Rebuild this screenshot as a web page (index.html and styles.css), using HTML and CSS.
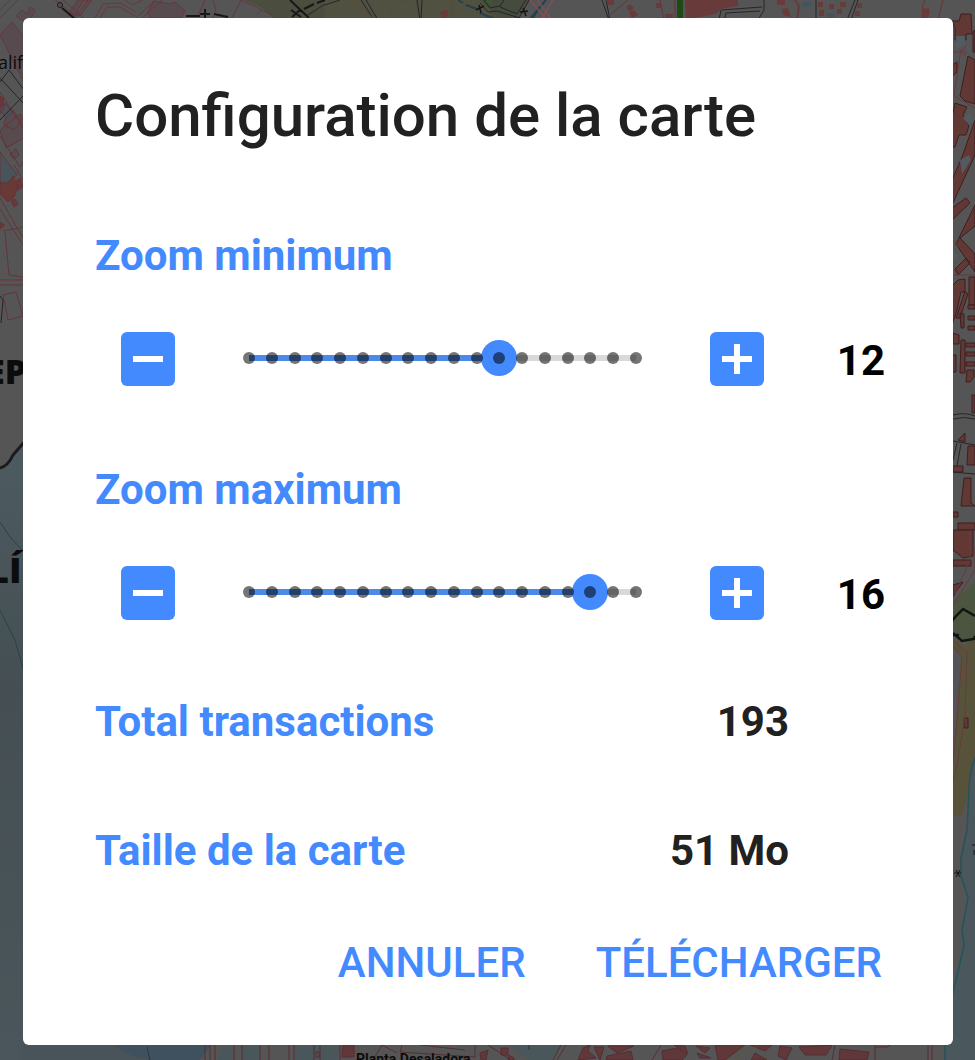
FILE: index.html
```html
<!DOCTYPE html>
<html lang="fr">
<head>
<meta charset="utf-8">
<meta name="viewport" content="width=device-width, initial-scale=1">
<title>Configuration de la carte</title>
<link rel="stylesheet" href="styles.css">
</head>
<body>
<svg class="map" viewBox="0 0 975 1060" preserveAspectRatio="xMidYMid slice" aria-hidden="true">
  <defs>
    <linearGradient id="sea" x1="0" x2="0" y1="0" y2="1">
      <stop offset="0" stop-color="#4d5b60"/><stop offset=".4" stop-color="#454f53"/><stop offset="1" stop-color="#4a565b"/>
    </linearGradient>
  </defs>
  <rect width="975" height="1060" fill="#565555"/>
  <!-- land use -->
  <path fill="#4b4d3e" d="M245 0H530L518 20H275L262 8Z"/>
  <path fill="#505140" d="M325 0H490V20H325Z"/>
  <path fill="#454b3d" d="M480 0H525L516 18H500Z"/>
  <path fill="#4c5540" d="M950 604L975 582V650L950 628Z"/>
  <path fill="#57533b" d="M950 634L965 646 975 640V770L962 816H950Z"/>
  <path fill="#555357" d="M950 646L961 656 953 760H950Z"/>
  <!-- sea -->
  <path fill="url(#sea)" d="M0 468Q8 466 13 455L26 440V1060H0Z"/>
  <path fill="#4a575d" d="M975 758Q969 774 969 790L967 830 961 858V876L968 898 962 930V945L950 1005V1045H945V1060H975Z"/>
  <path fill="none" stroke="#1d1a1d" stroke-width="3" d="M0 468Q8 466 13 455L26 440"/>
  <path fill="none" stroke="#24535d" stroke-width="1.5" d="M975 758Q969 774 969 790L967 830 961 858V876L968 898 962 930 964 946 950 1005M945 1045V1060"/>
  <path fill="none" stroke="#25434c" d="M0 522L10 537 24 552M0 610L15 640 24 672"/>
  <path fill="#3f505f" d="M20 1044H212L200 1060H150Q128 1057 113 1044Z"/>
  <path fill="#48535a" d="M20 1044H114Q130 1058 150 1060H20Z"/>
  <path fill="#49565a" d="M222 1044H232V1060H218ZM242 1044H259V1060H242ZM295 1044H338V1060H295ZM508 1044H561L552 1060H529Z"/>
  <!-- top streets -->
  <g fill="#584b4f" stroke="#66373d">
    <path d="M0 35L12 22 44 62 24 82ZM16 16L22 10 27 14 30 7 35 10 32 17 24 22ZM69 13L78 0H88L76 16ZM84 0L75 14 80 16 92 0ZM148 11L154 1 170 4 175 2 185 11 181 18H150Z"/>
    <path fill="none" d="M0 10L10 0M0 18L18 0M55 0L80 20M63 0L86 20M94 20L103 4 120 3 136 12M99 20L107 7 120 7 135 16M125 0L132 5 143 0M155 0L134 20M162 0L140 20M197 18L205 0M213 0L216 10 212 20M232 18L241 0 273 15M257 15L262 10"/>
  </g>
  <g fill="none" stroke="#181818" stroke-width="2">
    <path d="M62 8L75 19M186 16H200M200 14H210M205 9V19M214 14L228 17M290 0L309 18M292 17L300 10M291 10L301 17M304 9L314 4M317 3L325 0"/>
    <circle cx="60" cy="5" r="2.5" stroke-width="1"/>
  </g>
  <g fill="none" stroke="#242628">
    <path d="M325 5L340 0M361 0L374 20M366 0L378 20M417 0L420 20M422 0L421 20M484 0L490 8 500 6 504 0M480 3L488 12 497 11 520 18M500 7L517 14 526 0M529 0L518 20M308 15L325 4"/>
    <path stroke="#5c4930" d="M354 0L373 18M381 2Q388 5 391 12L398 20M403 0Q407 4 410 0M451 0L453 20"/>
    <path stroke="#26414e" stroke-width="2" d="M458 0L463 3M466 5L477 9M480 13L495 19M546 0L530 19M539 8L533 18"/>
    <path stroke="#7d5058" stroke-width="1.5" d="M530 0L547 20M537 0L552 20M553 0L542 18"/>
    <path stroke="#161616" stroke-width="1.5" d="M476 10L484 6M479 5L481 13M520 12L528 11M523 8L526 16"/>
    <path stroke="#2f6325" stroke-width="3" d="M487 2H492"/>
    <path stroke="#1f4a14" stroke-width="6" d="M680 0V20"/>
    <path d="M602 0L609 20M606 0L610 20M719 20L721 10 762 7M724 20L726 13 760 11M764 0V10L758 20M816 0V20M855 0L847 20M858 0L851 20"/>
  </g>
  <g fill="#683a39">
    <path d="M606 0H614V5H608ZM626 7L630 4 634 8 630 12ZM629 13L634 10 638 15 632 18ZM440 12L447 10 449 16 443 18ZM656 3H661V8H656ZM665 14H673V20H665ZM685 0H738V6L725 8 715 14 700 17 686 20ZM777 0H785V5H777ZM782 9L788 8 791 17 783 15ZM818 2H823V7H818ZM819 10H824V16H819ZM829 4H834V9H829ZM837 9H842V14H837ZM840 2H846V7H840ZM855 11H860V16H855ZM857 3H862V8H857ZM922 8L930 9 928 20H921Z"/>
    <path fill="none" stroke="#683a39" stroke-width="2" d="M795 0L799 6 797 20"/>
    <path fill="none" stroke="#62353a" d="M660 0L664 20M675 0V20M925 0L922 8M943 0L938 20M611 14L628 0"/>
  </g>
  <path fill="#43545c" d="M802 2H811V7H802ZM827 13H835V18H827Z"/>
  <!-- left quarter -->
  <g fill="#584b4f" stroke="#63343a">
    <path d="M0 130L20 114 24 122V138L6 148ZM10 154L16 149 19 155 14 159ZM0 100L6 107 0 114ZM7 113L13 110 21 122 14 130 4 125Z"/>
    <path fill="#48545a" d="M0 152L17 175 0 188ZM5 103L12 112 6 118 2 112Z"/>
    <path fill="#683935" d="M0 182L8 184 13 176 18 187 14 197 8 202 0 194ZM16 181L20 178 23 187 18 190ZM11 201L15 199 18 204 14 207ZM0 222L5 225 0 229ZM0 96L4 99 2 107 0 106Z"/>
    <path fill="none" d="M0 136L20 167 23 162M0 198L23 238M0 209L23 245M24 182L14 165M3 231L24 227M5 232L9 275 23 277M0 280H23M0 285H23M3 295L16 292 23 316 8 320ZM0 92L24 130"/>
  </g>
  <path fill="none" stroke="#242526" d="M0 82L9 70 24 90M0 78L24 104M0 120L24 95M0 296L3 300 1 323"/>
  <!-- right quarter -->
  <g fill="#613834" stroke="#3d1f21">
    <path d="M952 21H959L961 14H971L972 34H966V40H955V28ZM973 32L975 30V52H973ZM968 56L975 60V104L965 101 960 96ZM952 65L957 62V72L952 76ZM955 103L967 107 963 115 969 126 966 135H959L955 147H951V122ZM975 120V155L952 205V180L962 157ZM952 208L966 198 970 203 952 220ZM975 205V226L960 238 975 254V272L956 244ZM955 269L966 258 970 263 958 275ZM952 286L958 280 965 279V292H961L957 310 952 325ZM969 277H975V305H969ZM965 291L968 294 960 318H956ZM960 313L964 314V328H961ZM953 333L959 335V344H953ZM961 340H965V373H960ZM952 355H956V372H952ZM967 370H974V377L970 382H966ZM972 395H975V413H972ZM958 440L965 433V442ZM968 446H975V465H967ZM953 466H963V472H953ZM964 478H971V503L975 506H961ZM953 512H958V517H953ZM958 523H975V530H958Z"/>
    <path d="M968 305H975V309H968ZM968 316H975V320H968ZM968 326H975V330H968ZM966 343H975V347H966ZM966 352H975V356H966ZM966 362H975V366H966ZM953 530H973V556L963 558 953 550ZM953 560H971V566H953ZM953 585L963 582 953 596ZM964 718H968V728H964Z"/>
  </g>
  <path fill="#515b60" d="M960 160L969 155 971 160 962 174ZM956 36H965V45L956 49ZM963 118L969 113 975 120 969 125ZM952 250L958 256 952 263Z"/>
  <g fill="none" stroke="#693a3d">
    <path d="M952 52Q963 54 966 45M961 49L954 96 975 108M953 240L975 265M953 275H975M970 530V560L953 599M975 547V570L953 605M952 640L967 652 965 715 958 760 953 782M952 645L962 657 957 720 953 760"/>
    <path stroke="#252627" d="M953 415Q965 412 975 416M953 419Q965 416 975 419M953 441L975 445M953 472L975 474M957 443L953 460M961 444L957 466"/>
    <circle cx="964" cy="53" r="2"/>
  </g>
  <path fill="none" stroke="#11150f" stroke-width="2.5" d="M952 621L956 616 963 609 975 616M953 633L962 641 974 639 975 636M953 635H959"/>
  <path stroke="#161616" d="M954 873H961M956 870L960 877M960 870L956 877M972 845H975M974 850V855"/>
  <!-- bottom streets -->
  <g fill="#613839" stroke="#562d32">
    <path d="M343 1045H354V1057H342ZM480 1053L488 1050 486 1060H481ZM501 1048H508V1055H501ZM509 1055L514 1058V1060H508ZM578 1060L583 1048 590 1045 588 1051 596 1058ZM594 1047H604L600 1060ZM607 1056L631 1051 633 1060H606ZM608 1046H634L617 1053ZM662 1051L677 1048 687 1055 682 1060H663ZM674 1045L685 1046 688 1054ZM696 1046L710 1048 705 1053ZM697 1053L711 1058H700ZM715 1045H745L725 1060H718ZM750 1045H772L765 1051ZM755 1053L767 1060H751ZM780 1046L792 1048 786 1060 778 1056ZM799 1047L832 1045 826 1055H805ZM840 1049L869 1052 867 1060H839Z"/>
    <path fill="none" d="M205 1045V1060M210 1045V1060M215 1045V1060M234 1045V1060M242 1045V1060M260 1045V1060M269 1045V1060M289 1045V1060M294 1045V1060M314 1045V1060M320 1045V1060M340 1045V1060M316 1052H319V1057H316ZM373 1060L382 1045 397 1053M402 1045L400 1052 475 1057 475 1045M420 1045L465 1050M488 1045L511 1060M561 1045L553 1060M566 1045L557 1060M661 1045L652 1060M835 1045L832 1060M875 1045V1060M890 1045L887 1047H875M928 1045V1060M932 1045V1060"/>
  </g>
  <path fill="none" stroke="#5a5c36" d="M728 1060L747 1045M735 1060L757 1046"/>
  <path fill="none" stroke="#263943" d="M147 1047L150 1060M529 1045V1050"/>
  <g class="map-names">
    <text x="-2" y="69" font-size="18">alif</text>
    <text x="-14" y="384" font-size="34" font-weight="800">EP</text>
    <text x="-12" y="583" font-size="36" font-weight="800">LÍI</text>
    <text class="map-place" x="356" y="1064" font-size="14" font-weight="700">Planta Desaladora</text>
  </g>
</svg>

<main class="dialog" role="dialog" aria-labelledby="title">
  <h1 class="title" id="title">Configuration de la carte</h1>

  <section class="setting">
    <label class="label" for="zoom-min">Zoom minimum</label>
    <div class="controls">
      <button class="step" type="button" aria-label="Diminuer le zoom minimum">
        <svg viewBox="0 0 54 54" aria-hidden="true"><path d="M12 24h30v6H12z"/></svg>
      </button>
      <div class="slider">
        <input class="range range-min" id="zoom-min" type="range" min="1" max="18" value="12">
        <div class="ticks" aria-hidden="true"><i></i><i></i><i></i><i></i><i></i><i></i><i></i><i></i><i></i><i></i><i></i><i></i><i></i><i></i><i></i><i></i><i></i><i></i></div>
      </div>
      <button class="step" type="button" aria-label="Augmenter le zoom minimum">
        <svg viewBox="0 0 54 54" aria-hidden="true"><path d="M12 24h12V12h6v12h12v6H30v12h-6V30H12z"/></svg>
      </button>
      <output class="level" for="zoom-min">12</output>
    </div>
  </section>

  <section class="setting">
    <label class="label" for="zoom-max">Zoom maximum</label>
    <div class="controls">
      <button class="step" type="button" aria-label="Diminuer le zoom maximum">
        <svg viewBox="0 0 54 54" aria-hidden="true"><path d="M12 24h30v6H12z"/></svg>
      </button>
      <div class="slider">
        <input class="range range-max" id="zoom-max" type="range" min="1" max="18" value="16">
        <div class="ticks" aria-hidden="true"><i></i><i></i><i></i><i></i><i></i><i></i><i></i><i></i><i></i><i></i><i></i><i></i><i></i><i></i><i></i><i></i><i></i><i></i></div>
      </div>
      <button class="step" type="button" aria-label="Augmenter le zoom maximum">
        <svg viewBox="0 0 54 54" aria-hidden="true"><path d="M12 24h12V12h6v12h12v6H30v12h-6V30H12z"/></svg>
      </button>
      <output class="level" for="zoom-max">16</output>
    </div>
  </section>

  <dl class="summary">
    <div class="fact"><dt class="label">Total transactions</dt><dd class="amount">193</dd></div>
    <div class="fact"><dt class="label">Taille de la carte</dt><dd class="amount">51 Mo</dd></div>
  </dl>

  <footer class="actions">
    <button class="action" type="button">ANNULER</button>
    <button class="action" type="button">TÉLÉCHARGER</button>
  </footer>
</main>
</body>
</html>
```

FILE: styles.css
```css
* {
  box-sizing: border-box;
}

body {
  margin: 0;
  padding: 18px 22px 15px 23px;
  background: #565555;
  color: #212121;
  font-family: Roboto, sans-serif;
}

.map {
  position: fixed;
  inset: 0;
  z-index: -1;
  width: 100%;
  height: 100%;
}

.map-names {
  fill: #0c0c0c;
  font-family: "Open Sans", sans-serif;
}

.map-place {
  font-family: Roboto, sans-serif;
}

.dialog {
  padding: 62px 68px 58px 72px;
  border-radius: 6px;
  background: #fff;
}

.title {
  margin: 0;
  font-size: 60px;
  font-weight: 500;
  line-height: 72px;
}

.setting {
  margin-top: 80px;
}

.label {
  display: block;
  color: #448aff;
  font-size: 42px;
  font-weight: 700;
  line-height: 48px;
}

.controls {
  display: grid;
  grid-template-columns: 54px 1fr 54px 65px;
  align-items: center;
  column-gap: 56px;
  margin-top: 52px;
  padding-left: 26px;
}

.step {
  width: 54px;
  height: 54px;
  padding: 0;
  border: 0;
  border-radius: 6px;
  background: #448aff;
}

.step svg {
  display: block;
  fill: #fff;
}

.slider {
  display: grid;
  align-items: center;
  padding-bottom: 2px;
}

.range,
.ticks {
  grid-area: 1 / 1;
}

.range {
  appearance: none;
  width: 100%;
  height: 36px;
  margin: 0;
  background:
    linear-gradient(#4c8ae8, #4c8ae8) 18px center / calc((100% - 36px) * var(--fill)) 6px no-repeat,
    linear-gradient(#d9d9d9, #d9d9d9) center / calc(100% - 36px) 6px no-repeat;
}

.range-min {
  --fill: 11 / 17;
}

.range-max {
  --fill: 15 / 17;
}

.range::-webkit-slider-thumb {
  appearance: none;
  width: 36px;
  height: 36px;
  border-radius: 50%;
  background: #448aff;
}

.ticks {
  z-index: 1;
  display: flex;
  justify-content: space-between;
  padding: 0 12px;
  pointer-events: none;
}

.ticks i {
  width: 12px;
  height: 12px;
  border-radius: 50%;
  background: rgb(0 0 0 / 54%);
}

.level {
  padding-top: 4px;
  color: #000;
  font-size: 42px;
  font-weight: 700;
  line-height: 48px;
  text-align: right;
}

.summary {
  display: grid;
  gap: 81px;
  margin: 76px 0 0;
  padding-right: 96px;
}

.fact {
  display: flex;
  justify-content: space-between;
}

.amount {
  margin: 0;
  font-size: 42px;
  font-weight: 700;
  line-height: 48px;
}

.controls {
  height: 54px;
}

.summary {
  margin-top: 78px;
}

.actions {
  display: flex;
  justify-content: flex-end;
  gap: 70px;
  margin-top: 64px;
  padding-right: 3px;
}

.action {
  padding: 0;
  border: 0;
  background: none;
  color: #448aff;
  font: 500 42px/48px Roboto, sans-serif;
}
```
